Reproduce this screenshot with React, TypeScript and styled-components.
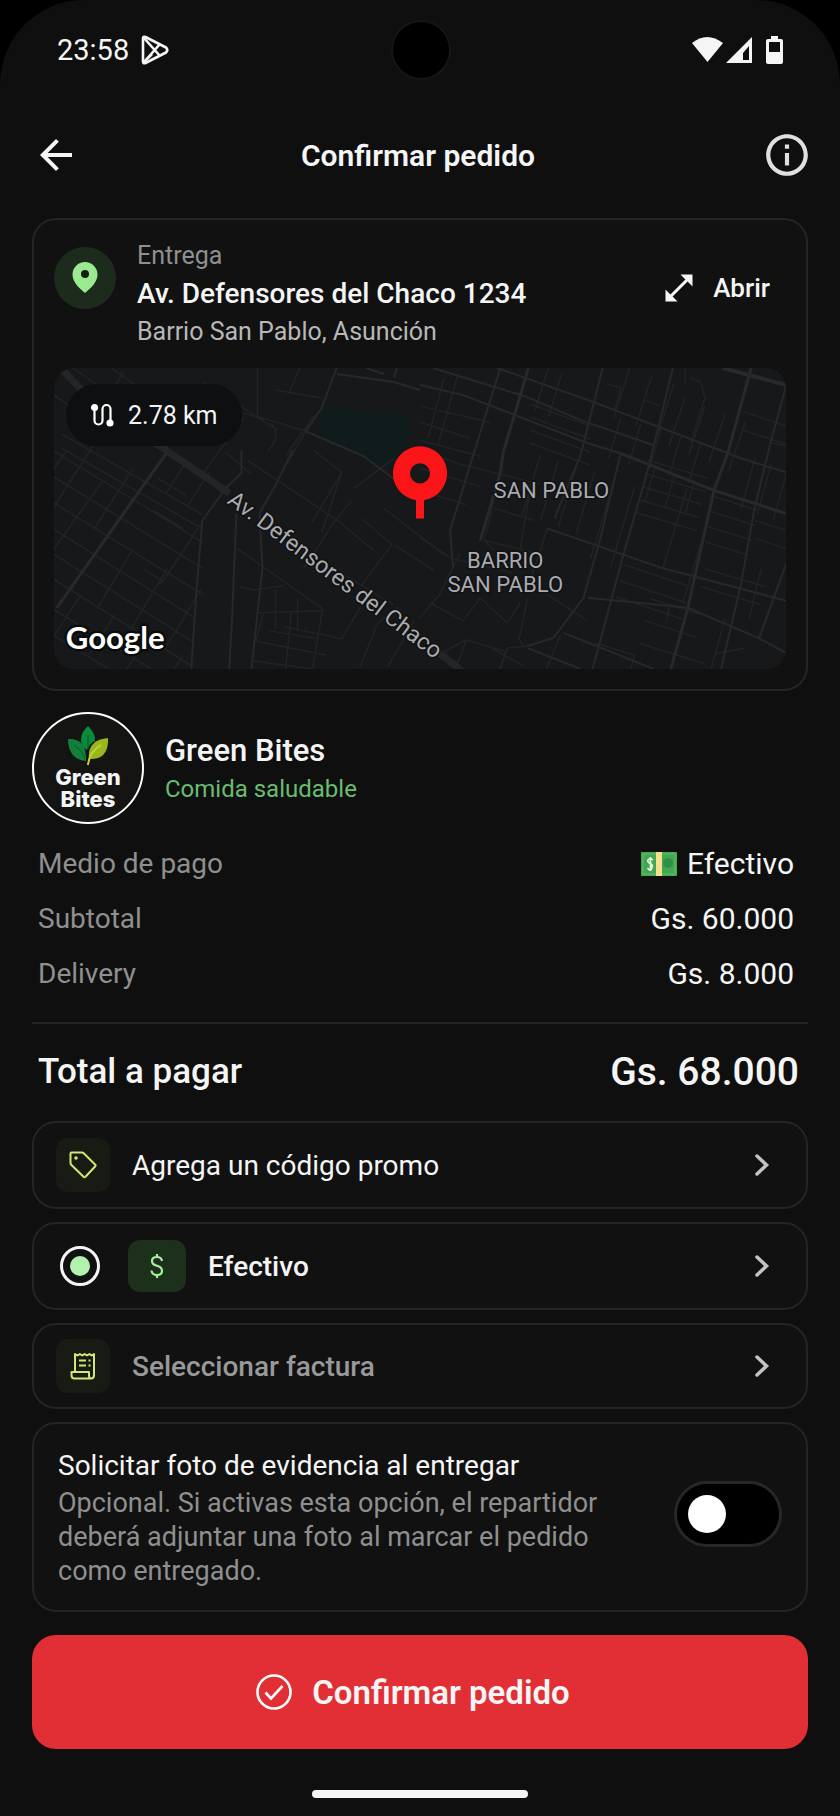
import { useState } from "react";
import styled, { createGlobalStyle } from "styled-components";
import { MdArrowBack, MdInfoOutline, MdOpenInFull } from "react-icons/md";

const GlobalStyle = createGlobalStyle`
  * {
    box-sizing: border-box;
  }

  body {
    margin: 0;
    background: #000;
    color: #f5f5f5;
    font-family: Roboto, "Liberation Sans", sans-serif;
  }

  button {
    border: 0;
    padding: 0;
    background: none;
    color: inherit;
    font: inherit;
    cursor: pointer;
  }

  svg {
    display: block;
    flex: none;
  }
`;

const Screen = styled.div`
  min-height: 100vh;
  display: flex;
  flex-direction: column;
  background: #0f0f0f;
  border-radius: 84px 84px 0 0;
`;

const StatusBar = styled.div`
  display: grid;
  grid-template-columns: 1fr auto 1fr;
  align-items: center;
  height: 99px;
  padding: 0 56px 0 57px;
`;

const StatusGroup = styled.div<{ $end?: boolean }>`
  display: flex;
  align-items: center;
  justify-content: ${({ $end }) => ($end ? "flex-end" : "flex-start")};
  gap: 12px;
  font-size: 29px;
`;

const Camera = styled.div`
  width: 60px;
  height: 60px;
  border: 2px solid #161616;
  border-radius: 50%;
  background: #000;
`;

const Header = styled.header`
  display: grid;
  grid-template-columns: 1fr auto 1fr;
  align-items: center;
  height: 112px;
  padding: 0 28px 0 24px;
`;

const Title = styled.h1`
  margin: 0;
  font-size: 30px;
  font-weight: 600;
`;

const IconButton = styled.button<{ $end?: boolean }>`
  justify-self: ${({ $end }) => ($end ? "end" : "start")};
  margin-left: 8px;
`;

const Main = styled.main`
  display: flex;
  flex-direction: column;
  padding: 7px 32px 0;
`;

const Card = styled.section`
  border: 2px solid #242424;
  border-radius: 24px;
  background: #111;
`;

const DeliveryCard = styled(Card)`
  display: grid;
  gap: 17px;
  padding: 17px 20px 20px;
`;

const DeliveryHead = styled.div`
  display: flex;
  align-items: flex-start;
`;

const PinBadge = styled.div`
  display: grid;
  place-items: center;
  width: 62px;
  height: 62px;
  margin: 10px 21px 0 0;
  border-radius: 50%;
  background: #1d2b1c;
`;

const Address = styled.div`
  flex: 1;
  line-height: 38px;
`;

const Caption = styled.div<{ $color: string }>`
  color: ${({ $color }) => $color};
  font-size: 25px;
`;

const Street = styled.div`
  font-size: 28px;
  font-weight: 500;
`;

const OpenButton = styled.button`
  display: flex;
  align-items: center;
  gap: 16px;
  height: 102px;
  padding-right: 16px;
  font-size: 26px;
  font-weight: 500;
`;

const MapFrame = styled.div`
  position: relative;
  height: 301px;
  border-radius: 20px;
  overflow: hidden;
  background: #17181a;
`;

const MapDrawing = styled.svg`
  width: 100%;
  height: 100%;
`;

const DistanceChip = styled.div`
  position: absolute;
  top: 16px;
  left: 12px;
  display: flex;
  align-items: center;
  gap: 14px;
  height: 62px;
  padding: 0 24px;
  border-radius: 31px;
  background: #0e0f10;
  font-size: 25px;
`;

const Brand = styled.div`
  display: flex;
  align-items: center;
  gap: 21px;
  margin-top: 21px;
`;

const Logo = styled.div`
  display: flex;
  flex-direction: column;
  align-items: center;
  width: 112px;
  height: 112px;
  padding-top: 12px;
  border: 2px solid #fff;
  border-radius: 50%;
  background: #141513;
`;

const LogoName = styled.span`
  font-family: Inter, "Liberation Sans", sans-serif;
  font-size: 22px;
  font-weight: 800;
  line-height: 22px;
`;

const BrandText = styled.div`
  padding-top: 4px;
  line-height: 39px;
`;

const BrandName = styled.h2`
  margin: 0;
  font-size: 31px;
  font-weight: 500;
`;

const Tagline = styled.div`
  color: #68bd70;
  font-size: 24px;
`;

const Summary = styled.dl`
  margin: 12px 0 0;
  padding: 0 14px 0 6px;
`;

const SummaryRow = styled.div`
  display: flex;
  align-items: center;
  justify-content: space-between;
  font-size: 28px;
  line-height: 55px;
`;

const SummaryLabel = styled.dt`
  color: #8f8f8f;
`;

const SummaryValue = styled.dd`
  display: flex;
  align-items: center;
  gap: 10px;
  margin: 0;
  font-size: 30px;
`;

const Divider = styled.hr`
  width: 100%;
  height: 2px;
  margin: 21px 0 0;
  border: 0;
  background: #232323;
`;

const Total = styled.div`
  display: flex;
  align-items: center;
  justify-content: space-between;
  padding: 24px 9px 25px 6px;
  font-size: 35px;
  font-weight: 500;
  line-height: 48px;
`;

const TotalAmount = styled.strong`
  font-size: 39px;
  font-weight: 500;
`;

const Options = styled.div`
  display: grid;
  gap: 13px;
`;

const Option = styled(Card)<{ $muted?: boolean; $strong?: boolean }>`
  display: flex;
  align-items: center;
  min-height: ${({ $muted }) => ($muted ? 86 : 88)}px;
  padding: 0 36px 0 22px;
  color: ${({ $muted }) => ($muted ? "#999" : "#f5f5f5")};
  font-size: 28px;
  font-weight: ${({ $strong }) => ($strong ? 500 : 400)};
  text-align: left;
  cursor: pointer;
`;

const OptionText = styled.span`
  flex: 1;
`;

const Tile = styled.span<{ $green?: boolean }>`
  display: grid;
  place-items: center;
  width: ${({ $green }) => ($green ? 58 : 54)}px;
  height: ${({ $green }) => ($green ? 52 : 54)}px;
  margin-right: 22px;
  border-radius: 12px;
  background: ${({ $green }) => ($green ? "#1d301c" : "#181b14")};
  color: ${({ $green }) => ($green ? "#a6f29c" : "#cdea74")};
`;

const Radio = styled.input`
  appearance: none;
  display: grid;
  place-items: center;
  width: 40px;
  height: 40px;
  margin: 0 28px 0 4px;
  border: 3px solid #f5f5f5;
  border-radius: 50%;
  cursor: pointer;

  &:checked::before {
    content: "";
    width: 20px;
    height: 20px;
    border-radius: 50%;
    background: #b3f2ad;
  }
`;

const PhotoCard = styled(Card)`
  display: flex;
  align-items: center;
  gap: 40px;
  padding: 22px 24px;
`;

const PhotoText = styled.label`
  flex: 1;
  font-size: 28px;
  line-height: 40px;
`;

const PhotoHint = styled.span`
  display: block;
  color: #8f8f8f;
  font-size: 27px;
  line-height: 34px;
`;

const Switch = styled.input`
  appearance: none;
  display: flex;
  align-items: center;
  flex: none;
  width: 108px;
  height: 66px;
  margin: 0 0 6px;
  padding: 0 11px;
  border: 3px solid #272727;
  border-radius: 33px;
  background: #000;
  cursor: pointer;

  &::before {
    content: "";
    width: 38px;
    height: 38px;
    border-radius: 50%;
    background: #fff;
  }

  &:checked {
    justify-content: flex-end;
    background: #2e7d32;
  }
`;

const ConfirmButton = styled.button`
  display: flex;
  align-items: center;
  justify-content: center;
  gap: 20px;
  height: 114px;
  margin-top: 23px;
  padding-right: 14px;
  border-radius: 24px;
  background: #e12f35;
  font-size: 33px;
  font-weight: 600;
`;

const HomeIndicator = styled.div`
  width: 216px;
  height: 8px;
  margin: 41px auto 18px;
  border-radius: 4px;
  background: #f5f5f5;
`;

// A run of parallel streets, each one shifted by the step from the one before
const streets = (x: number, y: number, dx: number, dy: number, stepX: number, stepY: number, count: number) =>
  Array.from({ length: count }, (_, i) => `M${x + stepX * i} ${y + stepY * i}l${dx} ${dy}`).join("");

const smallStreets = [
  // north west blocks
  "M0 26l30 22M20 0l60 42M58 0l32 22M150 14l40 26 34 22M204 0v50M222 22l46 8M246 0l-10 24M190 45l30 8 32 10M160 70l30-20",
  "M70 4l-16 30M218 55q10 14-4 28M190 50l-44 60M252 63l-24 42M172 84l26 22",
  // west grid
  streets(0, 82, 150, 92, 0, 26, 3),
  streets(0, 160, 140, 88, 0, 25, 3),
  streets(9, 66, 140, 80, 0, 14, 2),
  streets(0, 240, 98, 60, 0, 26, 2),
  streets(40, 78, -40, 62, 40, 22, 2),
  streets(134, 92, -22, 34, 22, 12, 2),
  streets(80, 180, -36, 60, 34, 20, 3),
  streets(28, 226, -26, 40, 34, 20, 4),
  "M0 102l14-20M0 182l50-70M150 152l-40 60-4 4M110 213l-20-13M130 160l-30-18M105 110l28 17",
  // south centre
  "M184 180l85 60M269 240l-10 60M186 218l14 3 30-4M204 244l66-2M210 244l-8 30M238 242l-6 58M202 272l70 14M230 258l40 8 18 4 20-34",
  "M200 292l60 8M216 262l50 8M222 220v40M244 230v30M306 298l18-44 20-16M334 298l26-46M290 206l50 30M250 200l30-46 18-22",
  "M194 92l90 60 36 30M232 88l28-40M260 82l28 22-30 50M288 104l-20 60M308 150l30 26-30 40M330 140l60 46M300 120l40-30M340 176l40 26",
  // centre
  "M366 169l32 21 60 14M366 82l40 14 80 20M366 100l60 18M366 122l46 14M366 249l20-24 20-40M376 234l33 18 17-23 27 25 13-20",
  "M366 54l50 16M366 72l60 16M366 38l70 16M390 10l-16 60M404 6l-20 70M473 230l-8 40 4 8M466 180l10-60M440 140l40 12M430 172l50 12",
  "M386 285l26-14 40 12-6 17M412 271l-10 28M438 280l30 16M473 277l-20 2-8 22M493 160l-18 54 58 38M440 132l-10 40 10 10",
  // north east blocks
  streets(476, 36, 60, 22, 0, 13, 4),
  streets(494, 0, -14, 44, 14, 4, 2),
  streets(486, 86, -18, 60, 18, 6, 4),
  streets(575, 0, -16, 50, 22, 8, 3),
  streets(566, 50, -12, 40, 20, 6, 5),
  streets(630, 30, -16, 48, 20, 8, 4),
  "M552 16l14 4-6 22M590 32l16 6M636 10l10 4 4 16-14 44M690 44l41 14M688 62l43 14M630 0v16M714 74l17 4",
  // east grid
  streets(593, 92, 60, 18, -3, 13, 5),
  streets(659, 128, 44, 14, -3, 15, 4),
  streets(569, 196, 66, 22, -4, 16, 3),
  streets(600, 100, -10, 34, 20, 6, 3),
  streets(632, 120, -24, 80, 20, 34, 2),
  streets(650, 200, 60, 18, -4, 18, 2),
  streets(700, 90, -14, 50, 16, 6, 3),
  streets(560, 110, -24, 80, 20, 8, 2),
  streets(596, 230, 50, 16, -6, 22, 3),
  "M615 236l-4 18M700 170l31 10M700 152l31 10M620 285l30 10M540 274l40 12-4 14M660 285l30-6M506 266l-14 34M670 250l-14 50M706 200l-12 50",
].join("");

const mainStreets = [
  "M443 0L539 34 686 90 731 104",
  "M366 17L409 27 466 49 533 75 566 85",
  "M379 0L473 29 526 52 599 77",
  "M446 0L419 87 396 162 399 199",
  "M618 0L593 102 569 185 538 300",
  "M548 0L526 87 500 150",
  "M731 17L714 80 699 142 686 215 666 300",
  "M566 85L546 169 529 229 499 269 473 277",
  "M731 195L704 269",
  "M493 160L606 199 731 232",
  "M533 229L633 239 703 269 731 284",
  "M509 264L599 300M473 279L526 300",
  "M239 82L223 115 206 145 209 199 198 300",
  "M188 82L188 105 173 119 149 152 143 225 138 300",
  "M183 145L179 242 176 300",
  "M283 0L268 40 252 63M312 0L330 6M343 0L340 10",
  "M283 6L340 14 366 22M252 63L310 88 366 130",
].join("");

const StreetMap = () => (
  <MapDrawing viewBox="0 0 732 300" preserveAspectRatio="xMidYMid slice" role="img" aria-label="Mapa de entrega">
    <path d="M268 34l54 12 36 0-12 58-30-10-50-28z" fill="#101b1c" />
    <g fill="none" stroke="#212325">
      <path d={smallStreets} strokeWidth="1.5" />
      <path d={mainStreets} strokeWidth="2" stroke="#26282a" />
      <path d="M113 85L4 239M474 0L449 84 446 105 426 172M696 0L673 84 659 122 633 239 616 300M566 85L659 122 731 145" strokeWidth="3" stroke="#28292c" />
      <path d="M668 0L731 17" strokeWidth="4" stroke="#28292b" />
      <path d="M8 0L40 34 113 82 176 125M380 280L408 302" strokeWidth="7" stroke="#232527" />
    </g>
    <g
      fill="#a9abae"
      stroke="#111214"
      strokeWidth="3"
      paintOrder="stroke"
      fontSize="22"
      textAnchor="middle"
    >
      <text x="497" y="130">SAN PABLO</text>
      <text x="451" y="199">BARRIO</text>
      <text x="451" y="223">SAN PABLO</text>
      <text transform="translate(173 134) rotate(37)" fontSize="23" textAnchor="start">
        Av. Defensores del Chaco
      </text>
    </g>
    <path d="M366 78a27 27 0 0 1 4 53.700V150h-8v-18.300A27 27 0 0 1 366 78zm0 17a10 10 0 1 0 0 20 10 10 0 0 0 0-20z" fill="#fb1418" />
    <text
      x="13"
      y="280"
      fill="#fff"
      stroke="#0c0c0c"
      strokeWidth="5"
      paintOrder="stroke"
      fontFamily="Lato, sans-serif"
      fontSize="31"
      fontWeight="700"
    >
      Google
    </text>
  </MapDrawing>
);

const PlayIcon = () => (
  <svg width="28" height="30" viewBox="0 0 28 30" fill="none" stroke="#f5f5f5" strokeWidth="2.600" strokeLinejoin="round">
    <path d="M2 3.500v23q0 2.500 2.500 1.500L25 17.500q2.500-2.500 0-5L4.500 2Q2 1 2 3.500z" />
    <path d="M3 3l16 18M3 27L19 9M3 27l8-8" />
  </svg>
);

const SignalIcons = () => (
  <svg width="92" height="28" viewBox="0 0 92 28" fill="#f5f5f5">
    <path d="M0 7Q15 -5 31 7L15.500 26z" />
    <path fillRule="evenodd" d="M60 1v26H34zM57 10v14h-6V17z" />
    <path
      fillRule="evenodd"
      d="M79 0h7v3h3q2 0 2 2v21q0 2-2 2H76q-2 0-2-2V5q0-2 2-2h3zM77 6v10h11V6z"
    />
  </svg>
);

const PinIcon = () => (
  <svg width="26" height="32" viewBox="0 0 26 32">
    <path d="M13 0a12.500 12.500 0 0 1 12.500 12.500C25.500 20 19 26 13 31 7 26 .5 20 .5 12.500A12.500 12.500 0 0 1 13 0z" fill="#9bea92" />
    <circle cx="13" cy="12" r="4" fill="#122012" />
  </svg>
);

const RouteIcon = () => (
  <svg width="24" height="24" viewBox="0 0 24 24" fill="none" stroke="#fff" strokeWidth="2.200">
    <path d="M4.500 5v12.500a4 4 0 0 0 8 0V6a4 4 0 0 1 8 0v13" />
    <circle cx="4.500" cy="4.500" r="2.500" fill="#fff" />
    <circle cx="20" cy="20" r="2.500" fill="#fff" />
  </svg>
);

const LeafIcon = () => (
  <svg width="40" height="40" viewBox="0 0 40 40">
    <path d="M20 0q8 8 7 15-5 2-8 9-6-4-6-10Q13 6 20 0z" fill="#0b8a3c" />
    <path d="M0 13q19-1 18 22Q0 33 0 13z" fill="#12803a" />
    <path d="M40 12q1 22-19 21-2-19 19-21z" fill="#97b71d" />
    <path d="M20 9v14M6 19q9 6 11 14" stroke="#075728" fill="none" />
    <path d="M33 19q-12 7-13 20" stroke="#c3d43a" strokeWidth="2" fill="none" />
  </svg>
);

const CashIcon = () => (
  <svg width="36" height="24" viewBox="0 0 36 24">
    <path d="M0 0h36v24H0z" fill="#43a653" />
    <path d="M2 2h32v20H2z" fill="none" stroke="#65bd6d" />
    <circle cx="27" cy="11" r="5" fill="#2f8f43" />
    <path d="M15 0h6v24h-6z" fill="#f7e08c" />
    <path
      d="M12 8q-2.500-2-4.500-.5T8.500 11t3 2.500-1 3.500T6.500 16M9.500 5v13"
      fill="none"
      stroke="#e8f7e4"
      strokeWidth="1.600"
    />
  </svg>
);

const TagIcon = () => (
  <svg width="28" height="28" viewBox="0 0 28 28" fill="none" stroke="currentColor" strokeWidth="2" strokeLinejoin="round">
    <path d="M1.500 2.500q0-1 1-1H13q1 0 1.700.7l11.600 11.600q.7.7 0 1.400L16.500 25.800q-1 .9-2 0L2.200 13.700q-.7-.7-.7-1.700z" />
    <circle cx="7" cy="7" r="1.800" fill="currentColor" stroke="none" />
  </svg>
);

const ReceiptIcon = () => (
  <svg width="26" height="28" viewBox="0 0 26 28" fill="none" stroke="currentColor" strokeWidth="2" strokeLinejoin="round">
    <path d="M5 20V2l2.400 1.500L9.800 2l2.400 1.500L14.600 2 17 3.500 19.400 2l2.400 1.500L24 2v21q0 3.500-3 3.500H4.500Q1.500 26.500 1.500 23v-3H19v3.500q0 3 2 3" />
    <path d="M9 8.500h7M9 13.500h7M18.500 8.500h2M18.500 13.500h2" />
  </svg>
);

const DollarIcon = () => (
  <svg width="14" height="26" viewBox="0 0 14 26" fill="none" stroke="currentColor" strokeWidth="2.200">
    <path d="M12 8Q11.500 4 7 4 2 4 2 8q0 3.500 5 4.800T12 18q0 4-5 4-5 0-5.500-4.500M7 1v3M7 22v3" />
  </svg>
);

const ChevronIcon = () => (
  <svg width="16" height="24" viewBox="0 0 16 24" fill="none" stroke="#c4c4c4" strokeWidth="3.500" strokeLinecap="round">
    <path d="M3 3l9.500 9L3 21" />
  </svg>
);

const CheckIcon = () => (
  <svg width="36" height="36" viewBox="0 0 36 36" fill="none" stroke="#fff" strokeWidth="2.600">
    <circle cx="18" cy="18" r="16.500" />
    <path d="M9.500 18.500l5.500 6L26.500 12" />
  </svg>
);

const App: React.FC = (): JSX.Element => {
  const [photo, setPhoto] = useState(false);

  return (
    <>
      <GlobalStyle />
      <Screen>
        <StatusBar>
          <StatusGroup>
            <span>23:58</span>
            <PlayIcon />
          </StatusGroup>
          <Camera />
          <StatusGroup $end>
            <SignalIcons />
          </StatusGroup>
        </StatusBar>
        <Header>
          <IconButton aria-label="Volver">
            <MdArrowBack size={48} />
          </IconButton>
          <Title>Confirmar pedido</Title>
          <IconButton $end aria-label="Información">
            <MdInfoOutline size={50} color="#e0e0e0" />
          </IconButton>
        </Header>
        <Main>
          <DeliveryCard>
            <DeliveryHead>
              <PinBadge>
                <PinIcon />
              </PinBadge>
              <Address>
                <Caption $color="#8f8f8f">Entrega</Caption>
                <Street>Av. Defensores del Chaco 1234</Street>
                <Caption $color="#b8b8b8">Barrio San Pablo, Asunción</Caption>
              </Address>
              <OpenButton>
                <MdOpenInFull size={36} />
                Abrir
              </OpenButton>
            </DeliveryHead>
            <MapFrame>
              <StreetMap />
              <DistanceChip>
                <RouteIcon />
                2.78 km
              </DistanceChip>
            </MapFrame>
          </DeliveryCard>

          <Brand>
            <Logo>
              <LeafIcon />
              <LogoName>Green</LogoName>
              <LogoName>Bites</LogoName>
            </Logo>
            <BrandText>
              <BrandName>Green Bites</BrandName>
              <Tagline>Comida saludable</Tagline>
            </BrandText>
          </Brand>

          <Summary>
            <SummaryRow>
              <SummaryLabel>Medio de pago</SummaryLabel>
              <SummaryValue>
                <CashIcon />
                Efectivo
              </SummaryValue>
            </SummaryRow>
            <SummaryRow>
              <SummaryLabel>Subtotal</SummaryLabel>
              <SummaryValue>Gs. 60.000</SummaryValue>
            </SummaryRow>
            <SummaryRow>
              <SummaryLabel>Delivery</SummaryLabel>
              <SummaryValue>Gs. 8.000</SummaryValue>
            </SummaryRow>
          </Summary>
          <Divider />
          <Total>
            <span>Total a pagar</span>
            <TotalAmount>Gs. 68.000</TotalAmount>
          </Total>

          <Options>
            <Option as="button">
              <Tile>
                <TagIcon />
              </Tile>
              <OptionText>Agrega un código promo</OptionText>
              <ChevronIcon />
            </Option>
            <Option as="label" $strong>
              <Radio type="radio" name="payment" defaultChecked />
              <Tile $green>
                <DollarIcon />
              </Tile>
              <OptionText>Efectivo</OptionText>
              <ChevronIcon />
            </Option>
            <Option as="button" $muted $strong>
              <Tile>
                <ReceiptIcon />
              </Tile>
              <OptionText>Seleccionar factura</OptionText>
              <ChevronIcon />
            </Option>
            <PhotoCard>
              <PhotoText htmlFor="photo">
                Solicitar foto de evidencia al entregar
                <PhotoHint>
                  Opcional. Si activas esta opción, el repartidor deberá adjuntar una foto al marcar el pedido como
                  entregado.
                </PhotoHint>
              </PhotoText>
              <Switch
                id="photo"
                type="checkbox"
                role="switch"
                checked={photo}
                onChange={(e) => setPhoto(e.target.checked)}
              />
            </PhotoCard>
          </Options>

          <ConfirmButton>
            <CheckIcon />
            Confirmar pedido
          </ConfirmButton>
        </Main>
        <HomeIndicator />
      </Screen>
    </>
  );
};

export default App;
